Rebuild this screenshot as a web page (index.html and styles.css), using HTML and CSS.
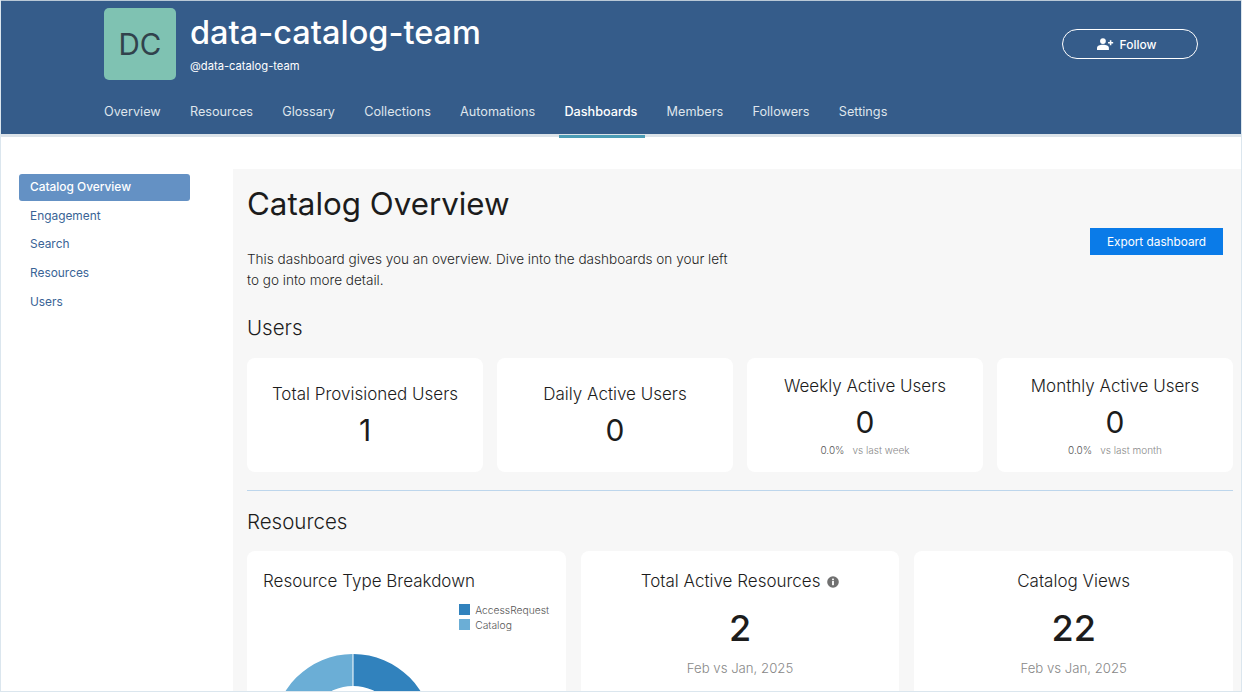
FILE: index.html
```html
<!DOCTYPE html>
<html lang="en">
<head>
  <meta charset="UTF-8" />
  <title>data-catalog-team</title>
  <link rel="stylesheet" href="styles.css">
</head>
<body>
  <div class="frame">
    <div class="header">
      <div class="team-row">
        <div class="avatar">DC</div>
        <div class="team-info">
          <h1 class="team-name">data-catalog-team</h1>
          <div class="team-handle">@data-catalog-team</div>
        </div>
        <button class="follow-btn">
          <svg class="follow-icon" viewBox="0 0 20 14" width="17" height="12">
            <circle cx="7" cy="3.6" r="3.4" fill="#fff"/>
            <path d="M0 14v-2.2C0 9.2 3 8 7 8s7 1.200 7 3.800V14z" fill="#fff"/>
            <path d="M16 2.500v6M13 5.500h6" stroke="#fff" stroke-width="1.800" fill="none"/>
          </svg>
          Follow
        </button>
      </div>
      <div class="tabs">
        <a class="tab">Overview</a>
        <a class="tab">Resources</a>
        <a class="tab">Glossary</a>
        <a class="tab">Collections</a>
        <a class="tab">Automations</a>
        <a class="tab active">Dashboards</a>
        <a class="tab">Members</a>
        <a class="tab">Followers</a>
        <a class="tab">Settings</a>
      </div>
    </div>
    <div class="content">
      <div class="sidebar">
        <a class="side-item selected">Catalog Overview</a>
        <a class="side-item">Engagement</a>
        <a class="side-item">Search</a>
        <a class="side-item">Resources</a>
        <a class="side-item">Users</a>
      </div>
      <div class="main">
        <div class="main-top">
          <div>
            <h2 class="page-title">Catalog Overview</h2>
            <p class="intro">This dashboard gives you an overview. Dive into the dashboards on your left to go into more detail.</p>
          </div>
          <button class="export-btn">Export dashboard</button>
        </div>

        <h3 class="section-title">Users</h3>
        <div class="user-cards">
          <div class="card">
            <div class="card-label">Total Provisioned Users</div>
            <div class="card-value">1</div>
          </div>
          <div class="card">
            <div class="card-label">Daily Active Users</div>
            <div class="card-value">0</div>
          </div>
          <div class="card">
            <div class="card-label">Weekly Active Users</div>
            <div class="card-value">0</div>
            <div class="card-delta"><span class="pct">0.0%</span><span>vs last week</span></div>
          </div>
          <div class="card">
            <div class="card-label">Monthly Active Users</div>
            <div class="card-value">0</div>
            <div class="card-delta"><span class="pct">0.0%</span><span>vs last month</span></div>
          </div>
        </div>

        <div class="divider"></div>

        <h3 class="section-title">Resources</h3>
        <div class="resource-cards">
          <div class="card chart-card">
            <div class="card-label">Resource Type Breakdown</div>
            <div class="legend">
              <div class="legend-row"><span class="swatch dark"></span>AccessRequest</div>
              <div class="legend-row"><span class="swatch light"></span>Catalog</div>
            </div>
            <svg class="donut" viewBox="0 0 160 160" width="160" height="160">
              <path d="M80.500 0A80 80 0 0 1 160 80H128A48 48 0 0 0 80.500 32z" fill="#3182bd"/>
              <path d="M79.500 0A80 80 0 0 0 0 80H32A48 48 0 0 1 79.500 32z" fill="#6baed6"/>
            </svg>
          </div>
          <div class="card stat-card">
            <div class="card-label">Total Active Resources
              <svg class="info-icon" viewBox="0 0 12 12" width="12" height="12">
                <circle cx="6" cy="6" r="5.800" fill="#707070"/>
                <rect x="5.100" y="5" width="1.800" height="4.200" fill="#fff"/>
                <rect x="5.100" y="2.600" width="1.800" height="1.600" fill="#fff"/>
              </svg>
            </div>
            <div class="stat-value">2</div>
            <div class="stat-note">Feb vs Jan, 2025</div>
          </div>
          <div class="card stat-card">
            <div class="card-label">Catalog Views</div>
            <div class="stat-value">22</div>
            <div class="stat-note">Feb vs Jan, 2025</div>
          </div>
        </div>
      </div>
    </div>
  </div>
</body>
</html>
```

FILE: styles.css
```css
* {
  box-sizing: border-box;
}
html, body {
  margin: 0;
  height: 100%;
  overflow: hidden;
}
body {
  font-family: Inter, "Liberation Sans", sans-serif;
  background: #fff;
  color: #1c1c1c;
}
.frame {
  height: 692px;
  overflow: hidden;
  border: 1px solid #dbe6ee;
  border-top: 0;
  display: flex;
  flex-direction: column;
}
.header {
  height: 137px;
  flex-shrink: 0;
  background: #355c8a;
  border-top: 1px solid #b9c8d6;
  border-bottom: 3px solid #dce3e9;
  padding: 7px 43px 0 103px;
  color: #fff;
}
.team-row {
  display: flex;
  align-items: flex-start;
  height: 72px;
}
.avatar {
  width: 72px;
  height: 72px;
  border-radius: 5px;
  background: #7fc2b2;
  color: #31424c;
  font-size: 29.500px;
  display: flex;
  align-items: center;
  justify-content: center;
  flex-shrink: 0;
}
.team-info {
  margin-left: 14px;
  flex: 1;
}
.team-name {
  margin: 5px 0 0;
  font-size: 32.500px;
  line-height: 40px;
  font-weight: 500;
}
.team-handle {
  margin-top: 6px;
  font-size: 11.200px;
  font-weight: 400;
  line-height: 14px;
}
.follow-btn {
  margin-top: 21px;
  width: 136px;
  height: 30px;
  border: 1px solid #fff;
  border-radius: 15px;
  background: none;
  color: #fff;
  font: 500 12px Inter, "Liberation Sans", sans-serif;
  display: flex;
  align-items: center;
  justify-content: center;
  gap: 6px;
  padding: 0 7px 0 0;
}
.tabs {
  display: flex;
  gap: 29.200px;
  margin-top: 23px;
}
.tab {
  position: relative;
  font-size: 12.700px;
  line-height: 18px;
  color: #dfe5ec;
}
.tab.active {
  color: #fff;
  font-weight: 500;
}
.tab.active::after {
  content: "";
  position: absolute;
  left: -5px;
  right: -8px;
  top: 32px;
  height: 3px;
  background: #4b9cb5;
}
.content {
  flex: 1;
  display: flex;
  padding-top: 32px;
  min-height: 0;
}
.sidebar {
  width: 232px;
  flex-shrink: 0;
  padding: 5px 43px 0 18px;
}
.side-item {
  display: block;
  height: 27px;
  margin-bottom: 1.700px;
  padding-left: 11px;
  font-size: 11.900px;
  line-height: 26px;
  color: #3a6496;
}
.side-item.selected {
  background: #6491c4;
  border-radius: 3px;
  color: #fff;
  font-weight: 500;
}
.main {
  flex: 1;
  background: #f7f7f7;
  padding: 0 8px 0 14px;
  min-width: 0;
}
.main-top {
  display: flex;
  justify-content: space-between;
  align-items: flex-start;
}
.page-title {
  margin: 15px 0 0;
  font-size: 31.300px;
  line-height: 40px;
  font-weight: 400;
}
.intro {
  margin: 25px 0 0;
  width: 490px;
  font-size: 13.550px;
  line-height: 20.500px;
  font-weight: 300;
  color: #1f1f1f;
}
.export-btn {
  margin: 59px 10px 0 0;
  width: 133px;
  height: 27px;
  border: 0;
  background: #0a7be8;
  color: #fff;
  font: 400 11.800px Inter, "Liberation Sans", sans-serif;
}
.section-title {
  margin: 23px 0 0;
  font-size: 20.500px;
  line-height: 30px;
  font-weight: 300;
}
.user-cards {
  display: grid;
  grid-template-columns: repeat(4, 1fr);
  gap: 14px;
  margin-top: 15px;
}
.card {
  background: #fff;
  border-radius: 8px;
  text-align: center;
}
.user-cards .card {
  height: 114px;
  display: flex;
  flex-direction: column;
  align-items: center;
  justify-content: center;
}
.card-label {
  font-size: 17px;
  line-height: 24px;
  font-weight: 300;
}
.card-value {
  font-size: 30px;
  line-height: 36px;
  font-weight: 400;
  margin-top: 6px;
}
.card-delta {
  display: flex;
  gap: 8px;
  font-size: 10px;
  line-height: 14px;
  margin-top: 3px;
  color: #8a8a8a;
  font-weight: 300;
}
.pct {
  color: #555;
}
.divider {
  height: 1px;
  background: #bdd6ec;
  margin-top: 18px;
}
.divider + .section-title {
  margin-top: 16px;
}
.resource-cards {
  display: grid;
  grid-template-columns: repeat(3, 1fr);
  gap: 15px;
  margin-top: 14px;
}
.resource-cards .card {
  height: 200px;
}
.chart-card {
  position: relative;
  text-align: left;
  padding: 18px 16px;
  overflow: hidden;
}
.legend {
  position: absolute;
  top: 51px;
  right: 16.500px;
  font-size: 10.300px;
  font-weight: 300;
  color: #555;
}
.legend-row {
  display: flex;
  align-items: center;
  gap: 5px;
  height: 15px;
}
.swatch {
  width: 11px;
  height: 11px;
}
.swatch.dark {
  background: #3182bd;
}
.swatch.light {
  background: #6baed6;
}
.donut {
  position: absolute;
  left: 26px;
  top: 103px;
}
.stat-card {
  padding-top: 18px;
}
.info-icon {
  margin-left: 2px;
  vertical-align: -1px;
}
.stat-value {
  font-size: 36px;
  line-height: 44px;
  font-weight: 500;
  margin-top: 13px;
}
.stat-note {
  margin-top: 9px;
  font-size: 13.200px;
  line-height: 18px;
  color: #888;
  font-weight: 300;
}
```
